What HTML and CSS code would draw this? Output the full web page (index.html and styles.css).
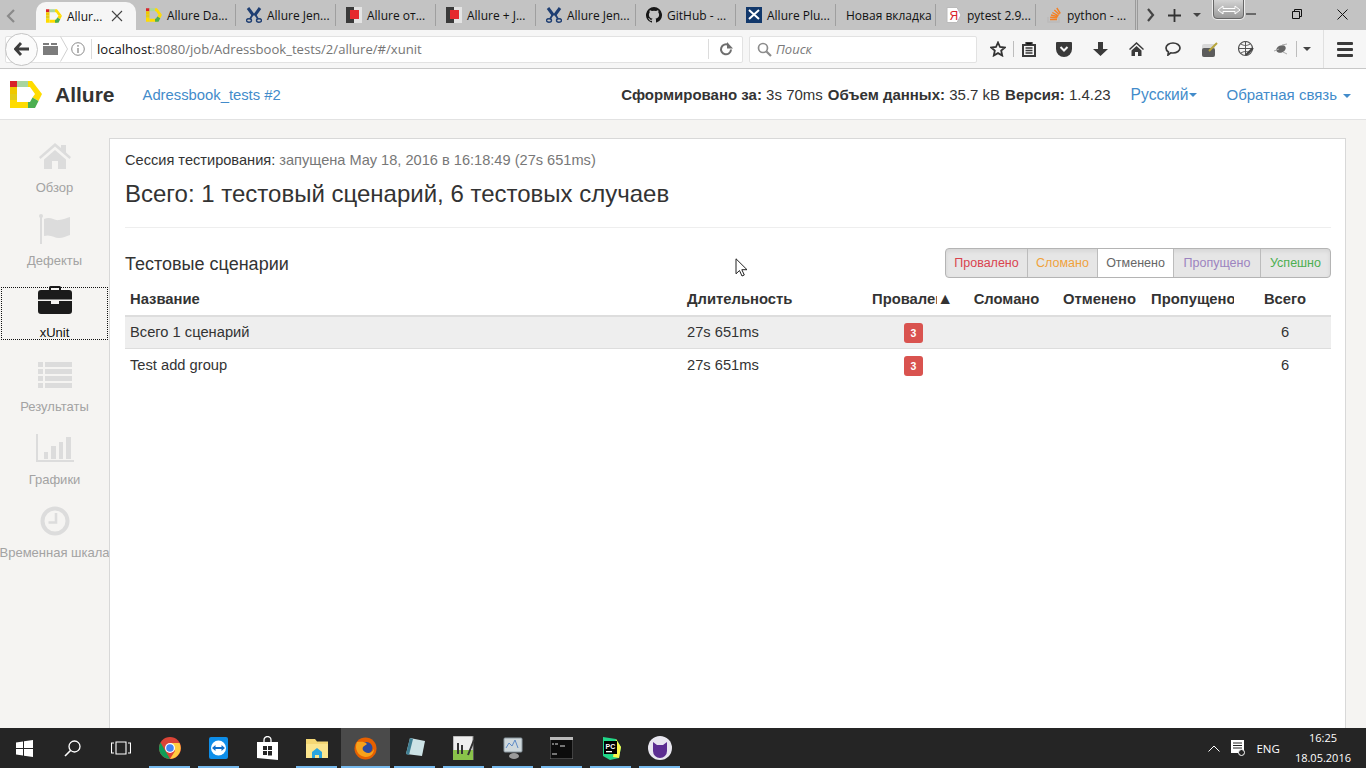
FILE: index.html
```html
<!DOCTYPE html>
<html lang="ru">
<head>
<meta charset="utf-8">
<title>Allure</title>
<link rel="stylesheet" href="styles.css">
</head>
<body>
<svg class="defs" width="0" height="0" aria-hidden="true">
  <symbol id="allure" viewBox="0 0 32 27">
    <path d="M0 0h7v6H0z" fill="#d8232a"/><path d="M7 0h11v6H7z" fill="#a9d5a0"/>
    <path d="M0 6h7v7H0z" fill="#f0c800"/><path d="M0 13h7v6H0z" fill="#e4cc18"/><path d="M0 19h7v8H0z" fill="#ffdc00"/>
    <path d="M7 21h15v6H7z" fill="#ffdc00"/>
    <path d="M22 0l10 13h-7L20 6h-2V0z" fill="#ffdc00"/>
    <path d="M25 13h7l-3.500 7-6-3.500z" fill="#ffdc00"/>
    <path d="M22.500 16.500l6 3.500L25 27h-7v-6h2z" fill="#4caf50"/>
  </symbol>
  <symbol id="jenkins" viewBox="0 0 16 16">
    <path d="M2 1l5.500 7.500M14 1L8.500 8.500" stroke="#1f3f73" stroke-width="3" fill="none"/>
    <path d="M7 7L4 12M9 7l3 5" stroke="#1f3f73" stroke-width="1.800" fill="none"/>
    <ellipse cx="3" cy="13.500" rx="2.500" ry="1.700" fill="none" stroke="#1f3f73" stroke-width="1.400"/>
    <ellipse cx="13" cy="13.500" rx="2.500" ry="1.700" fill="none" stroke="#1f3f73" stroke-width="1.400"/>
  </symbol>
  <symbol id="redsq" viewBox="0 0 16 16">
    <rect width="16" height="16" fill="#e4e4e4"/><rect width="8" height="16" fill="#3a3a3a"/><rect x="4" y="3" width="9" height="9" fill="#e5282d"/>
  </symbol>
</svg>

<div class="tabstrip">
  <svg class="tab-back" width="10" height="14" viewBox="0 0 10 14"><path d="M8 1L2 7l6 6" fill="none" stroke="#8a8a8a" stroke-width="2.200"/></svg>
  <div class="tab tab-active">
    <svg class="fav" viewBox="0 0 16 16"><use href="#allure"/></svg><span class="tab-label">Allur...</span>
    <svg class="tab-x" width="12" height="12" viewBox="0 0 12 12"><path d="M1 1l10 10M11 1L1 11" stroke="#444" stroke-width="1.100"/></svg>
  </div>
  <div class="tab"><svg class="fav" viewBox="0 0 16 16"><use href="#allure"/></svg><span class="tab-label">Allure Da...</span></div>
  <div class="tab"><svg class="fav" viewBox="0 0 16 16"><use href="#jenkins"/></svg><span class="tab-label">Allure Jen...</span></div>
  <div class="tab"><svg class="fav" viewBox="0 0 16 16"><use href="#redsq"/></svg><span class="tab-label">Allure от...</span></div>
  <div class="tab"><svg class="fav" viewBox="0 0 16 16"><use href="#redsq"/></svg><span class="tab-label">Allure + J...</span></div>
  <div class="tab"><svg class="fav" viewBox="0 0 16 16"><use href="#jenkins"/></svg><span class="tab-label">Allure Jen...</span></div>
  <div class="tab">
    <svg class="fav" viewBox="0 0 16 16"><path fill="#161616" d="M8 0a8 8 0 0 0-2.500 15.600c.4.100.5-.2.5-.4v-1.400c-2.200.5-2.700-1-2.700-1-.4-.9-.9-1.200-.9-1.200-.7-.5.100-.5.100-.5.800.1 1.200.8 1.200.8.700 1.200 1.900.9 2.300.7.100-.5.300-.9.500-1.100-1.800-.2-3.600-.9-3.600-4 0-.9.300-1.600.8-2.100-.1-.2-.4-1 .1-2.100 0 0 .7-.2 2.200.8a7.500 7.500 0 0 1 4 0c1.500-1 2.200-.8 2.200-.8.400 1.100.2 1.900.1 2.100.5.500.8 1.200.8 2.100 0 3.100-1.900 3.800-3.600 4 .3.200.5.700.5 1.500v2.200c0 .2.100.5.500.4A8 8 0 0 0 8 0z"/></svg>
    <span class="tab-label">GitHub - ...</span>
  </div>
  <div class="tab">
    <svg class="fav" viewBox="0 0 16 16"><rect width="16" height="16" fill="#12386b"/><path d="M3 3l10 9M13 3L3 12" stroke="#fff" stroke-width="2"/></svg>
    <span class="tab-label">Allure Plu...</span>
  </div>
  <div class="tab tab-plain"><span class="tab-label">Новая вкладка</span></div>
  <div class="tab">
    <svg class="fav" viewBox="0 0 16 16"><path d="M1 .5h10l4 7.500-4 7.500H1z" fill="#fff" stroke="#bbb"/><text x="3.500" y="12.500" class="ya">Я</text></svg>
    <span class="tab-label">pytest 2.9...</span>
  </div>
  <div class="tab">
    <svg class="fav" viewBox="0 0 16 16"><path d="M2 10v5h11v-5" fill="none" stroke="#bcbbbb" stroke-width="1.500"/><path d="M4 12.500h7M4.200 10.300l7 .6M5 8l6.800 1.800M6.300 5.500l6.200 3.300M8.300 3l5 4.500M10.800 1l3.500 5.500" stroke="#f48024" stroke-width="1.400"/></svg>
    <span class="tab-label">python - ...</span>
  </div>
  <div class="tab-tools">
    <svg width="8" height="14" viewBox="0 0 8 14"><path d="M1 1l5 6-5 6" fill="none" stroke="#444" stroke-width="2.200"/></svg>
    <svg class="tool-plus" width="13" height="13" viewBox="0 0 13 13"><path d="M6.500 0v13M0 6.500h13" stroke="#333" stroke-width="1.800"/></svg>
    <span class="caret-dark"></span>
  </div>
  <div class="win-controls">
    <svg width="10" height="2" viewBox="0 0 10 2"><path d="M0 1h10" stroke="#111"/></svg>
    <svg width="10" height="10" viewBox="0 0 10 10"><path d="M2.500 2.500v-2h7v7h-2M.500 2.500h7v7h-7z" fill="none" stroke="#111"/></svg>
    <svg width="11" height="11" viewBox="0 0 11 11"><path d="M.5.500l10 10M10.500.500l-10 10" stroke="#111"/></svg>
  </div>
</div>

<div class="navbar">
  <div class="urlbar">
    <span class="back-circle"><svg width="16" height="14" viewBox="0 0 16 14"><path d="M7 1L1.500 7 7 13M2 7h13" fill="none" stroke="#3d3d3d" stroke-width="2.800"/></svg></span>
    <svg class="folder" width="15" height="12" viewBox="0 0 15 12"><path d="M0 2h6V0H0zM8 2h6V0H8zM0 3h15v9H0z" fill="#7c7c7c"/></svg>
    <svg class="chev" width="8" height="26" viewBox="0 0 8 26"><path d="M.5.500l7 12.500-7 12.500" fill="none" stroke="#d0d0d0"/></svg>
    <svg class="info" width="14" height="14" viewBox="0 0 14 14"><circle cx="7" cy="7" r="6.300" fill="none" stroke="#8a8a8a"/><path d="M7 6v5M7 3v1.700" stroke="#8a8a8a" stroke-width="1.300"/></svg>
    <span class="url-sep"></span>
    <span class="url"><span class="url-host">localhost</span>:8080/job/Adressbook_tests/2/allure/#/xunit</span>
    <span class="url-sep url-sep-r"></span>
    <svg class="reload" width="14" height="14" viewBox="0 0 14 14"><path d="M12 7.500A5 5 0 1 1 9.500 3" fill="none" stroke="#6e6e6e" stroke-width="2"/><path d="M8 0v6.500h6z" fill="#6e6e6e"/></svg>
  </div>
  <div class="searchbar">
    <svg width="15" height="15" viewBox="0 0 15 15"><circle cx="6" cy="6" r="4.500" fill="none" stroke="#8c8c8c" stroke-width="1.700"/><path d="M9.500 9.500l4.500 4.500" stroke="#8c8c8c" stroke-width="2.200"/></svg>
    <span class="search-text">Поиск</span>
  </div>
  <div class="nav-icons">
    <svg class="ni ni-star" width="16" height="16" viewBox="0 0 16 16"><path d="M8 1.500l2 4.500 4.800.5-3.600 3.200 1 4.800L8 12.100l-4.200 2.400 1-4.800L1.200 6.500 6 6z" fill="none" stroke="#333" stroke-width="1.800"/></svg>
    <span class="ni-sep"></span>
    <svg class="ni ni-list" width="14" height="15" viewBox="0 0 14 15"><path d="M1 3h12v11H1z" fill="none" stroke="#3a3a3a" stroke-width="2"/><path d="M4 .500h6v2.500H4zM3.500 6h7M3.500 8.500h7M3.500 11h7" stroke="#3a3a3a" stroke-width="1.300"/></svg>
    <svg class="ni ni-pocket" width="16" height="15" viewBox="0 0 16 15"><path d="M1 0h14a1 1 0 0 1 1 1v6a8 8 0 0 1-16 0V1a1 1 0 0 1 1-1z" fill="#3a3a3a"/><path d="M4.500 5L8 8.500 11.500 5" fill="none" stroke="#f6f6f6" stroke-width="2"/></svg>
    <svg class="ni ni-down" width="15" height="15" viewBox="0 0 15 15"><path d="M5 0h5v7h5l-7.500 7L0 7h5z" fill="#3a3a3a"/></svg>
    <svg class="ni ni-home" width="15" height="14" viewBox="0 0 15 14"><path d="M7.500 0L0 7l1 1 6.500-6 6.500 6 1-1zM2.500 8.500l5-4.500 5 4.500V14H9V10H6v4H2.500z" fill="#3a3a3a"/></svg>
    <svg class="ni ni-chat" width="16" height="14" viewBox="0 0 16 14"><path d="M8 1c4 0 7 2.200 7 5s-3 5-7 5c-.8 0-1.500-.1-2.200-.2L3 13l.4-3C1.900 9 1 7.600 1 6c0-2.800 3-5 7-5z" fill="none" stroke="#3a3a3a" stroke-width="1.700"/></svg>
    <svg class="ni ni-se" width="16" height="15" viewBox="0 0 16 15"><path d="M2 2h11v11a2 2 0 0 1-2 2H2a2 2 0 0 1-2-2V4a2 2 0 0 1 2-2z" fill="#d8d8d8"/><rect y="6" width="13" height="9" rx="2" fill="#5c5c5c"/><path d="M7 9l8-8" stroke="#b7a53b" stroke-width="2"/></svg>
    <svg class="ni ni-globe" width="16" height="16" viewBox="0 0 16 16"><circle cx="7.500" cy="7.500" r="7" fill="none" stroke="#555" stroke-width="1.200"/><path d="M.5 7.500h14M7.500.5v14M3 3c3 2 6 2 9 0M3 12c3-2 6-2 9 0" fill="none" stroke="#555"/><path d="M8 14l7-7" stroke="#444" stroke-width="2.200"/></svg>
    <svg class="ni ni-bug" width="16" height="12" viewBox="0 0 16 12"><ellipse cx="8" cy="6" rx="5" ry="3.500" fill="#666" transform="rotate(-25 8 6)"/><path d="M1 8l5-2M9 2l5-1M10 9l4 2" stroke="#aaa"/></svg>
    <span class="ni-sep ni-sep-b"></span>
    <span class="caret-dark caret-nav"></span>
    <span class="ni-sep ni-sep-menu"></span>
    <span class="burger"><i></i><i></i><i></i></span>
  </div>
</div>

<header class="app-header">
  <svg class="logo" width="32" height="27" viewBox="0 0 32 27"><use href="#allure"/></svg>
  <span class="brand">Allure</span>
  <a class="crumb">Adressbook_tests #2</a>
  <div class="meta">
    <span><b>Сформировано за:</b> 3s 70ms</span>
    <span><b>Объем данных:</b> 35.7 kB</span>
    <span><b>Версия:</b> 1.4.23</span>
  </div>
  <a class="hlink hlink-lang">Русский<span class="caret-blue caret-tight"></span></a>
  <a class="hlink">Обратная связь<span class="caret-blue"></span></a>
</header>

<div class="app-body">
  <nav class="side">
    <div class="side-item">
      <svg class="side-ico" width="32" height="26" viewBox="0 0 32 26"><path d="M16 0L0 14l1.500 2L16 3.500 30.500 16l1.500-2-5-4.500V2h-5v3zM5 16.500L16 7l11 9.500V26h-8v-8h-6v8H5z" fill="#dcdcdc"/></svg>
      <span>Обзор</span>
    </div>
    <div class="side-item">
      <svg class="side-ico" width="32" height="30" viewBox="0 0 32 30"><circle cx="2" cy="2" r="2" fill="#dcdcdc"/><rect x="1" y="2" width="2" height="28" fill="#dcdcdc"/><path d="M5 5c7-3 10 2 15 1 4-.5 8-2 11-3v18c-4 1-7 3-11 3-5 0-8-4-15-2z" fill="#dcdcdc"/></svg>
      <span>Дефекты</span>
    </div>
    <div class="side-item side-active">
      <svg class="side-ico" width="34" height="28" viewBox="0 0 34 28"><path d="M11 4V1.500A1.500 1.500 0 0 1 12.500 0h9A1.500 1.500 0 0 1 23 1.500V4h-2V2h-8v2z" fill="#1b1b1b"/><path d="M3 4h28a3 3 0 0 1 3 3v6.500H0V7a3 3 0 0 1 3-3zM0 15h13v3h8v-3h13v10a3 3 0 0 1-3 3H3a3 3 0 0 1-3-3z" fill="#1b1b1b"/></svg>
      <span>xUnit</span>
    </div>
    <div class="side-item">
      <svg class="side-ico" width="34" height="26" viewBox="0 0 34 26"><path d="M0 0h5v5H0zM7 0h27v5H7zM0 7h5v5H0zM7 7h27v5H7zM0 14h5v5H0zM7 14h27v5H7zM0 21h5v5H0zM7 21h27v5H7z" fill="#dcdcdc"/></svg>
      <span>Результаты</span>
    </div>
    <div class="side-item">
      <svg class="side-ico" width="38" height="28" viewBox="0 0 38 28"><path d="M0 0h2v26h36v2H0zM8 18h4v7H8zM15 12h5v13h-5zM23 8h4v17h-4zM30 3h5v22h-5z" fill="#dcdcdc"/></svg>
      <span>Графики</span>
    </div>
    <div class="side-item">
      <svg class="side-ico" width="30" height="30" viewBox="0 0 30 30"><circle cx="15" cy="15" r="12.500" fill="none" stroke="#dcdcdc" stroke-width="4"/><path d="M16 7v9.500H8.500" fill="none" stroke="#dcdcdc" stroke-width="2.600"/></svg>
      <span class="side-nowrap">Временная шкала</span>
    </div>
    <div class="side-collapse">«</div>
  </nav>

  <main class="card">
    <p class="session">Сессия тестирования: <span class="muted">запущена May 18, 2016 в 16:18:49 (27s 651ms)</span></p>
    <h2 class="total">Всего: 1 тестовый сценарий, 6 тестовых случаев</h2>
    <hr class="rule">
    <div class="section-head">
      <h4 class="section-title">Тестовые сценарии</h4>
      <div class="btn-group">
        <span class="btn c-red">Провалено</span>
        <span class="btn c-orange">Сломано</span>
        <span class="btn btn-on">Отменено</span>
        <span class="btn c-purple">Пропущено</span>
        <span class="btn c-green">Успешно</span>
      </div>
    </div>
    <table class="grid">
      <colgroup><col class="w-name"><col class="w-dur"><col class="w-st"><col class="w-st"><col class="w-st"><col class="w-st"><col></colgroup>
      <thead>
        <tr>
          <th class="left">Название</th>
          <th class="left">Длительность</th>
          <th><div class="th-flex"><span class="th-clip">Провалено</span><span class="arrow">▲</span></div></th>
          <th>Сломано</th>
          <th>Отменено</th>
          <th><div class="th-clip">Пропущено</div></th>
          <th>Всего</th>
        </tr>
      </thead>
      <tbody>
        <tr class="row-total">
          <td>Всего 1 сценарий</td><td>27s 651ms</td><td class="center"><span class="badge">3</span></td><td></td><td></td><td></td><td class="center">6</td>
        </tr>
        <tr>
          <td>Test add group</td><td>27s 651ms</td><td class="center"><span class="badge">3</span></td><td></td><td></td><td></td><td class="center">6</td>
        </tr>
      </tbody>
    </table>
  </main>
</div>

<svg class="cursor" width="13" height="19" viewBox="0 0 13 19"><path d="M1 .800v15l3.500-3.300 2.500 5.500 2.300-1-2.500-5.300H12z" fill="#fff" stroke="#222"/></svg>

<div class="resize-tip"><svg width="24" height="10" viewBox="0 0 24 10"><path d="M1 5l5-4v2.500h12V1l5 4-5 4V6.500H6V9z" fill="#bbb" stroke="#fff"/></svg></div>

<footer class="taskbar">
  <span class="tb tb-s"><svg width="17" height="17" viewBox="0 0 17 17"><path d="M0 2.500L7 1.500v6.500H0zM8 1.300L17 0v8H8zM0 9h7v6.500L0 14.500zM8 9h9v8l-9-1.300z" fill="#fff"/></svg></span>
  <span class="tb tb-s"><svg width="17" height="17" viewBox="0 0 17 17"><circle cx="10.500" cy="6.500" r="5.500" fill="none" stroke="#fff" stroke-width="1.300"/><path d="M6.500 10.500L1 16" stroke="#fff" stroke-width="1.600"/></svg></span>
  <span class="tb"><svg width="20" height="14" viewBox="0 0 20 14"><path d="M5 1h10v12H5zM3 2H.5v10H3M17 2h2.500v10H17" fill="none" stroke="#fff" stroke-width="1.100"/></svg></span>
  <span class="tb run"><svg width="22" height="22" viewBox="0 0 22 22"><circle cx="11" cy="11" r="11" fill="#db4437"/><path d="M11 22A11 11 0 0 1 1.500 5.500L7 15z" fill="#0f9d58"/><path d="M11 6h9.500A11 11 0 0 1 11 22l5-8z" fill="#ffcd40"/><circle cx="11" cy="11" r="5" fill="#fff"/><circle cx="11" cy="11" r="3.800" fill="#4285f4"/></svg></span>
  <span class="tb run"><svg width="20" height="22" viewBox="0 0 20 22"><rect width="19" height="22" rx="2" fill="#0e8ee9"/><ellipse cx="9.500" cy="11" rx="7.500" ry="7.500" fill="#fff"/><path d="M3 11l3.500-3v2h6V8l3.500 3-3.500 3v-2h-6v2z" fill="#0e6dc9"/></svg></span>
  <span class="tb"><svg width="21" height="24" viewBox="0 0 21 24"><path d="M7 6V4a3.500 3.500 0 0 1 7 0v2" fill="none" stroke="#fff" stroke-width="1.300"/><path d="M0 6h21v18L0 22z" fill="#fff"/><path d="M6 10h4v4H6zM11 10h4v4h-4zM6 15h4v4H6zM11 15h4v4.500h-4z" fill="#252525"/></svg></span>
  <span class="tb run"><svg width="22" height="19" viewBox="0 0 22 19"><path d="M0 0h9l2 2.500h11V19H0z" fill="#f4d774"/><path d="M0 5h22v14H0z" fill="#fbe58e"/><path d="M6 19v-6l5-4 5 4v6h-3v-3H9v3z" fill="#2aa5e0"/></svg></span>
  <span class="tb run tb-active"><svg width="23" height="23" viewBox="0 0 23 23"><circle cx="11.500" cy="11.500" r="11" fill="#e66000"/><circle cx="12.500" cy="11" r="6" fill="#2d4a9b"/><path d="M3 5c-3 7 1 14 8 15 6 .5 9-4 9-8-2 4-6 5-9 3-2-1-3-3-2-5 1-1 3-2 4-3-3-3-7-2-10-2z" fill="#f7a21b"/></svg></span>
  <span class="tb run"><svg width="22" height="22" viewBox="0 0 22 22"><path d="M6 1l15 3-3 15-16-2z" fill="#cde3e6"/><path d="M2 17l4-16 3 1-4 16z" fill="#3f7f93"/></svg></span>
  <span class="tb run"><svg width="22" height="24" viewBox="0 0 22 24"><rect width="20" height="24" fill="#eeeeee" stroke="#8a8a8a"/><rect y="14" width="20" height="10" fill="#8ac34a"/><path d="M5 7v11M9 9v9M15 19l6-15" stroke="#333" stroke-width="2"/></svg></span>
  <span class="tb run"><svg width="22" height="24" viewBox="0 0 22 24"><rect x="2" y="2" width="18" height="14" rx="1" fill="#cfd8dc" stroke="#8b98a0"/><path d="M4 12l3-5 3 3 3-6 3 8" fill="none" stroke="#5d8ac7"/><ellipse cx="12" cy="20" rx="5" ry="3" fill="#9a9a9a"/></svg></span>
  <span class="tb run"><svg width="23" height="22" viewBox="0 0 23 22"><rect width="23" height="22" fill="#0c0c0c" stroke="#777"/><rect width="23" height="3" fill="#bbb"/><path d="M2 7h2M5 7h3M10 9h5M2 17h5" stroke="#ddd"/></svg></span>
  <span class="tb run"><svg width="22" height="24" viewBox="0 0 22 24"><path d="M3 1l13 2 5 8-2 11-9 2-7-4z" fill="#21d789"/><path d="M16 3l5 8-2 11-6-1z" fill="#fcf84a"/><rect x="4" y="5" width="13" height="13" fill="#000"/><rect x="6" y="15" width="6" height="1.300" fill="#fff"/><text x="5.500" y="12.500" class="pc">PC</text></svg></span>
  <span class="tb run"><svg width="24" height="24" viewBox="0 0 24 24"><circle cx="12" cy="12" r="12" fill="#e8e6ef"/><path d="M5 6l4 3h6l4-3v9a7 7 0 0 1-14 0z" fill="#5c2d91"/></svg></span>
  <div class="tray">
    <svg width="12" height="7" viewBox="0 0 12 7"><path d="M.5 6.500L6 1l5.500 5.500" fill="none" stroke="#fff"/></svg>
    <svg class="tray-msg" width="15" height="16" viewBox="0 0 15 16"><path d="M0 0h13v11H8v2H0z" fill="#fff"/><path d="M2 3h9M2 5.500h9M2 8h9" stroke="#252525"/><circle cx="10.500" cy="12.500" r="3" fill="#252525" stroke="#fff"/></svg>
    <span class="lang">ENG</span>
    <span class="clock"><span>16:25</span><span>18.05.2016</span></span>
  </div>
</footer>
</body>
</html>
```
FILE: styles.css
```css
* { box-sizing: border-box; }
html, body { margin: 0; height: 100%; }
body {
  width: 1366px; height: 768px; overflow: hidden; display: flex; flex-direction: column;
  font-family: "Liberation Sans", Arial, sans-serif; font-size: 14px; color: #333; background: #fff;
  position: relative;
}
.defs { position: absolute; }

/* browser tabs */
.tabstrip { height: 30px; background: #c3c3c3; display: flex; align-items: center; padding-left: 36px; position: relative; flex: none; font-family: "Open Sans", "Noto Sans", sans-serif; font-size: 12px; color: #111; }
.tab-back { position: absolute; left: 6px; top: 9px; }
.tab { width: 100px; height: 22px; display: flex; align-items: center; padding-left: 10px; gap: 5px; border-right: 1px solid #9f9f9f; flex: none; white-space: nowrap; }
.tab-active { height: 28px; margin-top: 2px; background: #f6f6f6; border-right: 0; border-radius: 10px 10px 0 0; position: relative; }
.tab-x { margin-left: 4px; }
.fav { width: 16px; height: 16px; flex: none; }
.ya { font: 12px "Liberation Sans", sans-serif; fill: #d8232a; }
.tab-label { display: block; }
.tab-tools { display: flex; align-items: center; height: 30px; padding-left: 9px; width: 78px; border-left: 3px double #9a9a9a; margin-left: -1px; }
.tool-plus { margin-left: 13px; }
.caret-dark { display: inline-block; border: 4px solid transparent; border-top: 4px solid #444; border-bottom: 0; margin-left: 12px; }
.win-controls { display: flex; align-items: center; margin-left: auto; height: 30px; margin-top: -2px; }
.win-controls svg { margin: 0 18px 0 0; }
.win-controls svg:nth-child(1) { margin-right: 36px; }
.win-controls svg:nth-child(2) { margin-right: 35px; }

/* browser nav bar */
.navbar { height: 39px; flex: none; background: #f6f6f6; border-bottom: 1px solid #c8c8c8; display: flex; align-items: center; padding: 0 0 0 5px; position: relative; }
.urlbar { width: 738px; height: 27px; background: #fff; border: 1px solid #e2e2e2; border-radius: 2px; display: flex; align-items: center; position: relative; padding-left: 37px; font-family: "Open Sans", "Noto Sans", sans-serif; font-size: 13.100px; color: #757575; }
.back-circle { position: absolute; left: -1px; top: -4px; width: 33px; height: 33px; border: 1px solid #c4c4c4; border-radius: 50%; background: #fbfbfb; display: flex; align-items: center; justify-content: center; }
.chev { margin-left: 2px; }
.info { margin-left: 3px; }
.url-sep { width: 1px; height: 20px; background: #dcdcdc; margin: 0 5px 0 6px; }
.url-sep-r { margin: 0 0 0 auto; }
.url { white-space: nowrap; }
.url-host { color: #111; }
.reload { margin: 0 9px 0 10px; }
.searchbar { width: 228px; height: 27px; margin-left: 6px; background: #fff; border: 1px solid #e2e2e2; border-radius: 2px; display: flex; align-items: center; padding-left: 7px; gap: 4px; }
.search-text { font-family: "Open Sans", "Noto Sans", sans-serif; font-style: italic; font-size: 13px; color: #7a7a7a; }
.nav-icons { display: flex; align-items: center; flex: 1; padding-left: 13px; height: 38px; }
.ni-sep { width: 1px; height: 16px; background: #bdbdbd; margin-left: 7px; }
.ni-list { margin-left: 8px; }
.ni-pocket { margin-left: 20px; }
.ni-down { margin-left: 21px; }
.ni-home { margin-left: 21px; }
.ni-chat { margin-left: 21px; }
.ni-se { margin-left: 21px; }
.ni-globe { margin-left: 20px; }
.ni-bug { margin-left: 19px; }
.ni-sep-b { margin-left: 7px; }
.caret-nav { margin-left: 6px; }
.ni-sep-menu { height: 38px; margin-left: 12px; background: #e0e0e0; }
.burger { display: flex; flex-direction: column; gap: 3px; margin-left: 13px; }
.burger i { display: block; width: 16px; height: 3px; background: #3a3a3a; border-radius: 1px; }

/* allure header */
.app-header { height: 51px; flex: none; display: flex; align-items: center; padding: 1px 15px 0 10px; border-bottom: 1px solid #e2e2e2; background: #fff; font-size: 15px; }
.logo { flex: none; }
.brand { font-size: 21px; font-weight: 700; margin-left: 13px; color: #333; }
.crumb, .hlink { color: #428bca; }
.crumb { margin-left: 28px; font-size: 14.800px; }
.meta { display: flex; gap: 5px; margin-left: auto; color: #333; }
.hlink { margin-left: 20px; }
.hlink-lang { font-size: 15.600px; }
.hlink-lang + .hlink { margin-left: 29px; }
.caret-blue { display: inline-block; border: 4px solid transparent; border-top-color: #428bca; border-bottom: 0; margin-left: 6px; vertical-align: middle; }
.caret-tight { margin-left: 1px; }

/* app body */
.app-body { flex: 1; display: flex; min-height: 0; background: #f5f4f2; padding-top: 18px; }
.side { width: 109px; flex: none; margin-top: -18px; padding-top: 17px; display: flex; flex-direction: column; overflow: hidden; }
.side-item { height: 73px; flex: none; display: flex; flex-direction: column; align-items: center; padding-top: 4px; color: #a3a3a3; font-size: 13px; text-align: center; }
.side-ico { height: 30px; flex: none; margin-bottom: 6px; }
.side-item span { line-height: 14px; margin-top: auto; padding-bottom: 15px; }
.side-active { color: #111; outline: 1px dotted #111; outline-offset: -1px; margin: 4px 1px 16px; height: 53px; padding-top: 0; }
.side-active .side-ico { margin-top: -2px; }
.side-active span { padding-bottom: 0; }
.side-nowrap { white-space: nowrap; }
.side-collapse { margin-top: auto; height: 8px; line-height: 24px; font-size: 20px; color: #c8c8c8; text-align: right; padding-right: 25px; flex: none; }

.card { flex: 1; margin-right: 20px; background: #fff; border: 1px solid #d8d8d8; border-width: 1px 1px 0 1px; padding: 13px 14px 0 15px; }
.session { margin: 0; font-size: 14.600px; line-height: 16px; color: #333; }
.muted { color: #777; }
.total { margin: 13px 0 0; font-size: 24px; font-weight: 400; line-height: 26px; color: #333; }
.rule { margin: 20px 0 0; border: 0; border-top: 1px solid #eee; }
.section-head { display: flex; justify-content: space-between; align-items: center; margin-top: 20px; height: 30px; }
.section-title { margin: 0; font-size: 18px; font-weight: 400; color: #333; padding-top: 2px; }
.btn-group { display: flex; height: 30px; border: 1px solid #b4b4b4; border-radius: 4px; font-size: 12.500px; background: #e6e6e6; box-shadow: inset 0 2px 4px rgba(0,0,0,.08); }
.btn { display: flex; align-items: center; justify-content: center; border-right: 1px solid #bcbcbc; }
.btn:last-child { border-right: 0; }
.btn:nth-child(1) { width: 82px; } .btn:nth-child(2) { width: 70px; } .btn:nth-child(3) { width: 76px; } .btn:nth-child(4) { width: 87px; } .btn:nth-child(5) { width: 69px; }
.btn-on { background: #fff; color: #666; }
.c-red { color: #d9434e; } .c-orange { color: #f0a23c; } .c-purple { color: #9c84c0; } .c-green { color: #4caf50; }

.grid { width: 1206px; border-collapse: collapse; table-layout: fixed; margin-top: 6px; }
.w-name { width: 557px; } .w-dur { width: 185px; } .w-st { width: 93px; }
.grid th { height: 32px; padding: 0 5px 2px; font-size: 14.800px; font-weight: 700; text-align: center; border-bottom: 2px solid #ddd; white-space: nowrap; color: #333; }
.grid th.left { text-align: left; }
.th-flex { display: flex; align-items: center; margin-right: -5px; padding-right: 7px; }
.th-clip { overflow: hidden; flex: 1; min-width: 0; text-align: left; }
.arrow { flex: none; font-size: 16px; line-height: 14px; }
.grid td { height: 34px; padding: 0 5px; font-size: 14.700px; color: #333; vertical-align: middle; }
.grid .center { text-align: center; }
.grid .row-total td { height: 32px; background: #eee; border-bottom: 1px solid #ddd; }
.badge { display: inline-block; min-width: 19px; height: 20px; margin-top: 2px; padding: 0 4px; background: #d9534f; color: #fff; border-radius: 3px; font-size: 10.500px; font-weight: 700; line-height: 20px; text-align: center; vertical-align: middle; }

/* overlays */
.cursor { position: absolute; left: 735px; top: 258px; }
.resize-tip { position: absolute; left: 1213px; top: -4px; width: 31px; height: 23px; background: linear-gradient(#ddd, #9a9a9a); border: 1px solid #666; border-radius: 4px; box-shadow: 0 0 0 1px #eee; display: flex; align-items: center; justify-content: center; padding-top: 4px; }

/* taskbar */
.taskbar { height: 40px; flex: none; background: #252525; display: flex; align-items: stretch; color: #fff; }
.tb { width: 49px; flex: none; display: flex; align-items: center; justify-content: center; position: relative; }
.tb-s { width: 48px; }
.run::after { content: ""; position: absolute; left: 4px; right: 4px; bottom: 0; height: 2px; background: #76b9ed; }
.tb-active { background: #4a4a4a; }
.tb-active::after { left: 0; right: 0; }
.pc { font: 700 7px "Liberation Sans", sans-serif; fill: #fff; }
.tray { margin-left: auto; display: flex; align-items: center; font-family: "Open Sans", "Noto Sans", sans-serif; font-size: 11.500px; padding-right: 15px; }
.tray-msg { margin-left: 11px; }
.lang { margin-left: 10px; }
.clock { display: flex; flex-direction: column; align-items: center; margin-left: 15px; line-height: 20px; font-size: 11px; }
```
